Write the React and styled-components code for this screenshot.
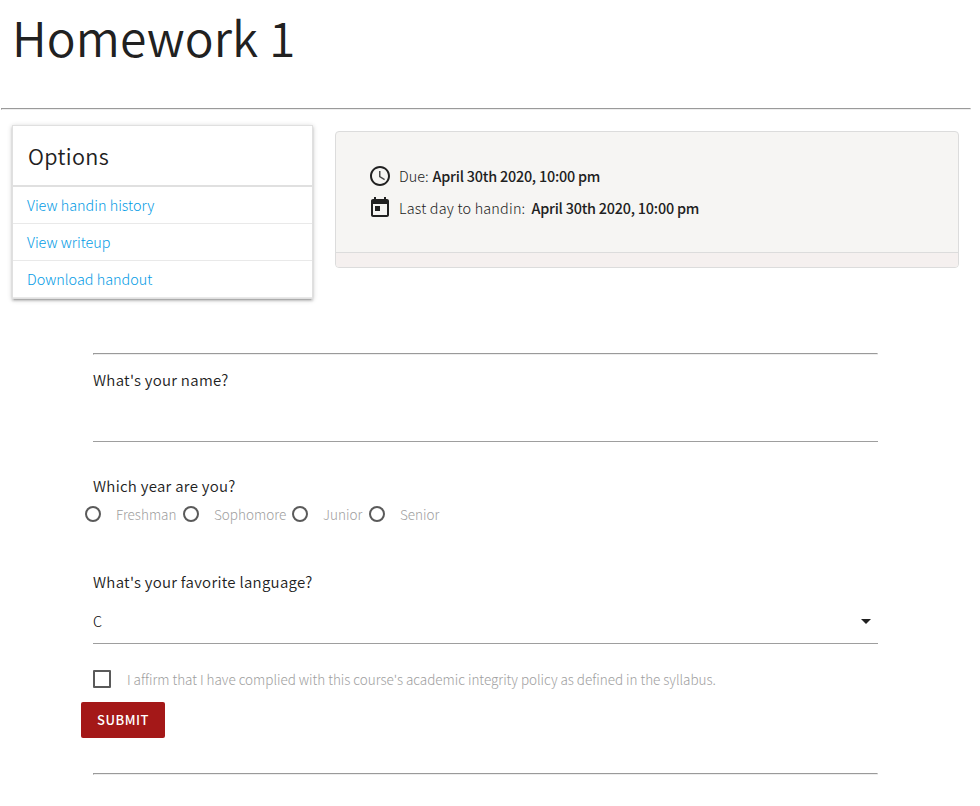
import React from 'react';
import styled, { createGlobalStyle } from 'styled-components';

const Global = createGlobalStyle`
  *, *::before, *::after { box-sizing: border-box; }
  body {
    margin: 0;
    background: #fff;
    color: #212121;
    font-family: "Source Sans Pro", "Noto Sans CJK SC", "Open Sans", sans-serif;
    font-weight: 300;
    font-size: 14.4px;
    overflow: hidden;
  }
`;

const Page = styled.main`
  width: 971px;
  height: 806px;
  padding-left: 1px;
`;

const Title = styled.h1`
  margin: 0;
  height: 108px;
  padding: 5px 0 0 11px;
  font-size: 48px;
  line-height: 62px;
  font-weight: 350;
  letter-spacing: 0.1px;
`;

const Rule = styled.hr`
  margin: 0;
  height: 2px;
  border: 1px inset #eee;
  border-color: #9a9a9a #eee #eee #9a9a9a;
  border-style: solid;
`;

const Columns = styled.div`
  display: flex;
  align-items: flex-start;
  gap: 22px;
  padding: 15px 12px 0 11px;
  height: 243px;
`;

const OptionsCard = styled.section`
  width: 301px;
  height: 174px;
  border: 1px solid #e0e0e0;
  box-shadow: 0 2px 2px 0 rgba(0, 0, 0, 0.14), 0 3px 1px -2px rgba(0, 0, 0, 0.12), 0 1px 5px 0 rgba(0, 0, 0, 0.2);
`;

const OptionsHeader = styled.h2`
  margin: 0;
  height: 61px;
  padding: 14px 15px;
  border-bottom: 2px solid #e0e0e0;
  font-size: 21.6px;
  line-height: 32px;
  font-weight: 350;
  letter-spacing: 0.35px;
`;

const OptionLink = styled.a`
  display: block;
  height: 37px;
  padding: 6px 14px;
  border-bottom: 1px solid #e9e9e9;
  color: #039be5;
  line-height: 24px;
  text-decoration: none;
`;

const InfoCard = styled.section`
  flex: 1;
  height: 137px;
  margin-top: 6px;
  border: 1px solid #dcdcdc;
  border-radius: 4px;
  background: #f6f5f3;
  overflow: hidden;
`;

const InfoBody = styled.div`
  height: 121px;
  padding: 28px 32px;
  border-bottom: 1px solid #dcdcdc;
`;

const InfoFooter = styled.div`
  height: 15px;
  background: #f5f0ef;
`;

const InfoRow = styled.div`
  display: flex;
  align-items: center;
  height: 32px;
  line-height: 20px;
  white-space: pre;
  svg { width: 24px; height: 24px; margin-right: 7px; fill: #212121; }
`;

const InfoLabel = styled.span`
  letter-spacing: ${(p) => p.$spacing || 0}px;
`;

const DateText = styled.strong`
  font-weight: 500;
  margin-left: ${(p) => p.$gap}px;
  letter-spacing: -0.22px;
`;

const Form = styled.form`
  width: 785px;
  margin-left: 92px;
`;

const Question = styled.div`
  height: 24px;
  line-height: 24px;
  margin-top: ${(p) => p.$top}px;
  font-size: 15px;
  font-weight: 350;
  letter-spacing: 0.28px;
`;

const TextField = styled.input`
  display: block;
  width: 100%;
  height: 50px;
  padding: 0;
  border: 0;
  border-bottom: 1px solid #9e9e9e;
  outline: 0;
  background: transparent;
  font: inherit;
`;

const Radios = styled.div`
  display: flex;
  margin: 4px 0 0 -8px;
  height: 24px;
`;

const RadioLabel = styled.label`
  display: flex;
  align-items: center;
  width: ${(p) => p.$width}px;
  color: #9e9e9e;
  font-size: 13.5px;
  white-space: nowrap;
`;

const RadioMark = styled.span`
  width: 16px;
  height: 16px;
  margin-right: 15px;
  flex: none;
  border: 2px solid #5a5a5a;
  border-radius: 50%;
`;

const Select = styled.div`
  display: flex;
  align-items: center;
  justify-content: space-between;
  height: 45px;
  margin-top: 5px;
  padding-right: 7px;
  border-bottom: 1px solid #9e9e9e;
`;

const SelectValue = styled.span`
  color: #000;
  margin-top: -2px;
`;

const Affirm = styled.label`
  display: flex;
  align-items: center;
  height: 24px;
  margin-top: 23px;
  color: #9e9e9e;
  font-size: 13.5px;
  letter-spacing: -0.02px;
  white-space: nowrap;
`;

const Box = styled.span`
  width: 18px;
  height: 18px;
  margin-right: 16px;
  border: 2px solid #5a5a5a;
  border-radius: 1px;
`;

const Submit = styled.button`
  display: block;
  width: 84px;
  height: 36px;
  margin: 11px 0 35px -12px;
  padding: 0;
  border: 0;
  border-radius: 2px;
  background: #a41818;
  color: #fff;
  font: 500 13px/36px "Source Sans Pro", "Noto Sans CJK SC", sans-serif;
  letter-spacing: 0.5px;
`;

const years = [['Freshman', 98], ['Sophomore', 109], ['Junior', 77], ['Senior', 90]];

export default function App() {
  return (
    <Page>
      <Global />
      <Title>Homework 1</Title>
      <Rule />
      <Columns>
        <OptionsCard>
          <OptionsHeader>Options</OptionsHeader>
          <OptionLink href="#">View handin history</OptionLink>
          <OptionLink href="#">View writeup</OptionLink>
          <OptionLink href="#">Download handout</OptionLink>
        </OptionsCard>
        <InfoCard>
          <InfoBody>
            <InfoRow>
              <svg viewBox="0 0 24 24"><path d="M11.99 2C6.47 2 2 6.48 2 12s4.47 10 9.99 10C17.52 22 22 17.52 22 12S17.52 2 11.99 2zM12 20c-4.42 0-8-3.58-8-8s3.58-8 8-8 8 3.58 8 8-3.58 8-8 8z" /><path d="M12.5 7H11v6l5.25 3.15.75-1.23-4.5-2.67z" opacity="0.8" /></svg>
              <InfoLabel>Due:</InfoLabel><DateText $gap={4}>April 30th 2020, 10:00 pm</DateText>
            </InfoRow>
            <InfoRow>
              <svg viewBox="0 0 24 24"><path d="M19 3h-1V1h-2v2H8V1H6v2H5c-1.11 0-1.99.9-1.99 2L3 19c0 1.1.89 2 2 2h14c1.1 0 2-.9 2-2V5c0-1.1-.9-2-2-2zm0 16H5V8h14v11zM7 10h5v5H7z" /></svg>
              <InfoLabel $spacing={0.2}>Last day to handin:</InfoLabel><DateText $gap={6}>April 30th 2020, 10:00 pm</DateText>
            </InfoRow>
          </InfoBody>
          <InfoFooter />
        </InfoCard>
      </Columns>
      <Form>
        <Rule />
        <Question $top={13}>What's your name?</Question>
        <TextField aria-label="Name" />
        <Question $top={32}>Which year are you?</Question>
        <Radios>
          {years.map(([name, width]) => (
            <RadioLabel key={name} $width={width}><RadioMark />{name}</RadioLabel>
          ))}
        </Radios>
        <Question $top={44}>What's your favorite language?</Question>
        <Select>
          <SelectValue>C</SelectValue>
          <svg width="10" height="5" viewBox="0 0 10 5"><path d="M0 0h10L5 5z" fill="#212121" /></svg>
        </Select>
        <Affirm><Box />I affirm that I have complied with this course's academic integrity policy as defined in the syllabus.</Affirm>
        <Submit type="button">SUBMIT</Submit>
        <Rule />
      </Form>
    </Page>
  );
}
